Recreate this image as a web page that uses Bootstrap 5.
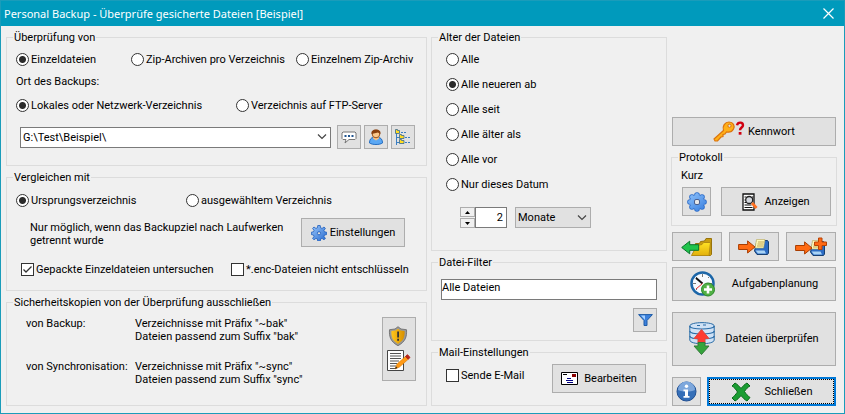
<!DOCTYPE html>
<html lang="de">
<head>
<meta charset="utf-8">
<meta name="viewport" content="width=device-width, initial-scale=1">
<title>Personal Backup</title>
<link href="https://cdn.jsdelivr.net/npm/bootstrap@5.3.0/dist/css/bootstrap.min.css" rel="stylesheet">
<style>
body{font-family:Roboto,"Noto Sans",sans-serif;font-size:11px;line-height:13px;color:#000;background:#f0f0f0}
.win{border:1px solid #1a9cba;min-height:100vh}
.titlebar{background:#009abc;color:#fff;height:25px;font-family:"Noto Sans","Open Sans",sans-serif;padding:0 10px 0 3px}
.titlebar button{border:0;background:none;padding:0;line-height:0}
.panes{display:grid;grid-template-columns:421fr 236fr 166fr;gap:4px;padding:4px 7px 7px 5px}
.pane{display:flex;flex-direction:column;gap:4px;min-width:0}
.group{border:1px solid #dcdcdc;padding:0 9px;min-width:0}
.group legend{float:none;width:auto;margin:0 0 5px -3px;padding:1px 1px 0;font-size:11px;line-height:14px;height:14px}
.line{display:grid;align-items:center;height:20px}
.l3{grid-template-columns:minmax(0,115fr) minmax(0,165fr) minmax(0,121fr)}
.l2a{grid-template-columns:minmax(0,220fr) minmax(0,181fr)}
.l2b{grid-template-columns:minmax(0,170fr) minmax(0,231fr)}
.l2c{grid-template-columns:minmax(0,210fr) minmax(0,186fr)}
.place{margin:2px 0 4px}
.opt{display:flex;align-items:center;gap:2px;white-space:nowrap}
.opt input.form-check-input{width:13px;height:13px;margin:0;border:1px solid #333;background-color:#fff;flex:none;box-shadow:none}
.opt input[type=checkbox]{border-radius:0}
.opt input[type=radio]:checked{background:radial-gradient(circle,#2b2b2b 3px,#fff 4px)}
.opt input[type=checkbox]:checked{background:#fff url("data:image/svg+xml,%3Csvg xmlns='http://www.w3.org/2000/svg' viewBox='0 0 11 11'%3E%3Cpath d='M1.500 5.500 4 8 9.500 2.500' fill='none' stroke='%23333' stroke-width='1.300'/%3E%3C/svg%3E") center/11px no-repeat}
.tool{--bs-btn-padding-x:0;--bs-btn-padding-y:0;--bs-btn-font-size:11px;--bs-btn-line-height:14px;--bs-btn-border-radius:0;--bs-btn-bg:#e1e1e1;--bs-btn-border-color:#adadad;--bs-btn-color:#000;--bs-btn-hover-bg:#e5f1fb;--bs-btn-hover-border-color:#0078d7;--bs-btn-hover-color:#000;display:flex;align-items:center;justify-content:center;white-space:nowrap}
.sq24{width:24px;height:24px}
.sq29{width:29px;height:29px}
.h29{height:29px}
.field{border:1px solid #7a7a7a;border-radius:0;height:21px;min-height:0;font-size:11px;line-height:15px;color:#000;background-color:#fff;padding:0 2px}
select.field{padding:0 20px 0 2px;background-image:url("data:image/svg+xml,%3Csvg xmlns='http://www.w3.org/2000/svg' viewBox='0 0 10 6'%3E%3Cpath d='M1 .5 5 4.500 9 .5' fill='none' stroke='%23444' stroke-width='1.200'/%3E%3C/svg%3E");background-size:10px 6px;background-position:right 3px center}
select.unit{width:76px;background-color:#e1e1e1;border-color:#adadad}
.spin{width:15px;display:flex;flex-direction:column;gap:1px}
.spin button{height:10px;border:1px solid #adadad;background:#f0f0f0;padding:0;line-height:0;display:flex;align-items:center;justify-content:center}
.num{width:32px;text-align:right;padding-right:3px}
.ages{display:grid;gap:5px;padding-left:5px}
.names{display:grid;grid-template-columns:109px 1fr;row-gap:17px;flex:1}
.pathrow{margin:10px 0 0 4px;padding-right:2px;gap:3px}
.pathrow select{margin-right:3px;flex:1 1 0}
.compare legend{margin-bottom:6px}
.hintrow{margin-top:8px;padding:0 12px 0 14px}
.hint{padding-top:3px;white-space:nowrap}
.settings{width:104px;gap:3px}
.checkrow{margin:12px 0 11px;padding-left:5px}
.excluderow{padding:3px 1px 0 10px}
.tall{width:34px;height:64px}
.period{padding:13px 0 22px 19px}
.filter{padding-bottom:8px}
.filter legend{margin-bottom:10px}
.top-text{padding:0 0 4px}
.mailrow{padding:0 11px 0 5px}
.mailrow .opt{height:20px;margin-top:1px}
.edit{width:94px;gap:6px}
.side{padding-top:87px}
.side>.tool,.trio,.closing{margin:0 1px}
.key{gap:3px}
.log{padding-bottom:9px}
.kurz{height:18px}
.logrow{gap:10px;padding-left:1px;margin-right:-4px}
.view{gap:6px}
.trio{display:grid;grid-template-columns:1fr 1fr 1fr;gap:7px;padding-top:2px}
.side .plan{height:34px;margin-top:2px;gap:16px}
.side .verify{height:54px;margin-top:7px;gap:10px}
.side .closing{margin-top:7px;gap:6px}
.default{gap:14px;border:2px solid #0078d7;position:relative}
.default::after{content:"";position:absolute;inset:0;border:1px dotted #000}
svg{flex:none;display:block}
</style>
</head>
<body>
<svg width="0" height="0" class="position-absolute" aria-hidden="true">
<defs>
<linearGradient id="blue" x1="0" y1="0" x2="1" y2="1"><stop offset="0" stop-color="#9cc8fa"/><stop offset="1" stop-color="#2468cf"/></linearGradient>
<linearGradient id="sky" gradientUnits="userSpaceOnUse" x1="3" y1="1" x2="17" y2="19"><stop offset="0" stop-color="#8cc0fa"/><stop offset="1" stop-color="#3a80e0"/></linearGradient>
<linearGradient id="gold" x1="0" y1="0" x2="1" y2="0"><stop offset="0" stop-color="#ffc51c"/><stop offset="1" stop-color="#d79000"/></linearGradient>
<linearGradient id="folder" x1="0" y1="0" x2="0" y2="1"><stop offset="0" stop-color="#ffe224"/><stop offset="1" stop-color="#e2b00c"/></linearGradient>
<symbol id="gear" viewBox="0 0 20 20"><g fill="url(#blue)" stroke="#1d5dbc" stroke-width="1"><path d="M8.500.6h3l.6 3 1.700.7L16.300 2.500l1.700 1.700-1.800 2.600.7 1.700 2.600.5v3l-2.600.5-.7 1.700 1.800 2.600-1.700 1.700-2.500-1.800-1.700.7-.6 2.900h-3l-.6-2.900-1.700-.7-2.500 1.800L2 16.800l1.800-2.600-.7-1.700-2.600-.5V9l2.600-.5.7-1.700L2 4.200l1.700-1.700 2.500 1.800 1.700-.7z"/><circle cx="10" cy="10.300" r="2" fill="#e1e1e1"/></g></symbol>
<symbol id="flower" viewBox="0 0 20 20"><g stroke="#2668c8" stroke-width="1.600" fill="#2668c8"><circle cx="10" cy="3" r="2"/><circle cx="10" cy="17" r="2"/><circle cx="3" cy="10" r="2"/><circle cx="17" cy="10" r="2"/><circle cx="5" cy="5" r="2"/><circle cx="15" cy="5" r="2"/><circle cx="5" cy="15" r="2"/><circle cx="15" cy="15" r="2"/></g><g fill="url(#sky)"><circle cx="10" cy="3" r="2"/><circle cx="10" cy="17" r="2"/><circle cx="3" cy="10" r="2"/><circle cx="17" cy="10" r="2"/><circle cx="5" cy="5" r="2"/><circle cx="15" cy="5" r="2"/><circle cx="5" cy="15" r="2"/><circle cx="15" cy="15" r="2"/><circle cx="10" cy="10" r="7"/></g><rect x="7.500" y="7.500" width="5" height="5" rx="1.500" fill="#e8e8e8" stroke="#4a5f90"/></symbol>
<symbol id="arrow" viewBox="0 0 18 14"><path d="M.6 4.500h9V.9L17 7l-7.400 6V9.500h-9z" fill="#ff6a12" stroke="#a83c00"/></symbol>
<symbol id="disk" viewBox="0 0 15 16"><path d="M3 1.500h10.500L14.500 3v11l-1 1.500H3L.5 12z" fill="#2c6cc4" stroke="#174071"/><path d="M1.500 11.500h9l1.500 3H4z" fill="#a9d3f4"/><path d="M2.500.5h8.500L9.500 9H1z" fill="#fff8b8" stroke="#b6a860" stroke-width=".6"/><path d="M4 3h6M3.500 5h6M3 7h6" stroke="#c0a552"/></symbol>
</defs>
</svg>
<main class="win">
<header class="titlebar d-flex align-items-center justify-content-between">
<span>Personal Backup - Überprüfe gesicherte Dateien [Beispiel]</span>
<button type="button" aria-label="Fenster schließen"><svg width="11" height="11"><path d="M.5.5l10 10M10.500.5l-10 10" stroke="#fff" stroke-width="1.200"/></svg></button>
</header>
<form class="panes">
<div class="pane">
<fieldset class="group pb-3">
<legend>Überprüfung von</legend>
<div class="line l3">
<label class="opt"><input class="form-check-input" type="radio" name="src" checked>Einzeldateien</label>
<label class="opt"><input class="form-check-input" type="radio" name="src">Zip-Archiven pro Verzeichnis</label>
<label class="opt"><input class="form-check-input" type="radio" name="src">Einzelnem Zip-Archiv</label>
</div>
<div class="line place" id="ort">Ort des Backups:</div>
<div class="line l2a">
<label class="opt"><input class="form-check-input" type="radio" name="loc" checked>Lokales oder Netzwerk-Verzeichnis</label>
<label class="opt"><input class="form-check-input" type="radio" name="loc">Verzeichnis auf FTP-Server</label>
</div>
<div class="d-flex align-items-center pathrow">
<select class="form-select field" aria-labelledby="ort"><option>G:\Test\Beispiel\</option></select>
<button type="button" class="btn tool sq24" aria-label="Kommentar"><svg width="16" height="13"><path d="M2 1h12l1 1v5.500l-1 1H8L4 12l1-3.500H2l-1-1V2z" fill="#fff" stroke="#777"/><path d="M3.500 4h2v2h-2zM7 4h2v2H7zM10.500 4h2v2h-2z" fill="#205590"/></svg></button>
<button type="button" class="btn tool sq24" aria-label="Benutzer"><svg width="16" height="16"><path d="M1.500 14c0-3.500 1.500-5.500 4-5.500h4.500c3 0 4.500 2 4.500 5.500-3 2-10 2-13 0z" fill="#5ba8f4" stroke="#256dc0"/><path d="M5 9.500l3 2 3-2v-2H5z" fill="#f7c283"/><circle cx="8" cy="5" r="3.800" fill="#fbc88b" stroke="#95501c"/><path d="M3.500 5C3 2 5 .5 8 .5s5 1.500 4.500 4.500L10 3.500z" fill="#89400e"/></svg></button>
<button type="button" class="btn tool sq24" aria-label="Verzeichnisbaum"><svg width="16" height="16"><path d="M1.500 4v12M2 8.500h3M2 13.500h3" stroke="#397ec2"/><path d="M6 3.500h6M10 8.500h5M10 13.500h5" stroke="#397ec2" stroke-dasharray="2 1"/><g fill="#ffdc22" stroke="#356792" stroke-width=".8"><path d="M.5.500h2v1h2v3h-4z"/><path d="M4.500 5.500h2v1h2.500v3H4.500z"/><path d="M4.500 10.500h2v1h2.500v3H4.500z"/></g></svg></button>
</div>
</fieldset>
<fieldset class="group compare">
<legend>Vergleichen mit</legend>
<div class="line l2b">
<label class="opt"><input class="form-check-input" type="radio" name="cmp" checked>Ursprungsverzeichnis</label>
<label class="opt"><input class="form-check-input" type="radio" name="cmp">ausgewähltem Verzeichnis</label>
</div>
<div class="d-flex justify-content-between hintrow">
<div class="hint">Nur möglich, wenn das Backupziel nach Laufwerken<br>getrennt wurde</div>
<button type="button" class="btn tool h29 settings"><svg width="16" height="16"><use href="#gear"/></svg>Einstellungen</button>
</div>
<div class="line l2c checkrow">
<label class="opt"><input class="form-check-input" type="checkbox" checked>Gepackte Einzeldateien untersuchen</label>
<label class="opt"><input class="form-check-input" type="checkbox">*.enc-Dateien nicht entschlüsseln</label>
</div>
</fieldset>
<fieldset class="group flex-grow-1">
<legend>Sicherheitskopien von der Überprüfung ausschließen</legend>
<div class="d-flex excluderow">
<div class="names align-content-start">
<div>von Backup:</div><div>Verzeichnisse mit Präfix "~bak"<br>Dateien passend zum Suffix "bak"</div>
<div>von Synchronisation:</div><div>Verzeichnisse mit Präfix "~sync"<br>Dateien passend zum Suffix "sync"</div>
</div>
<button type="button" class="btn tool tall" aria-label="Ausschlüsse bearbeiten"><svg width="24" height="46"><path d="M11 .7l3 2.300 5.500.7c.5 7-1 12-8.500 16C3.500 15.700 2 10.700 2.500 3.700L8 3z" fill="#999" stroke="#666" stroke-width=".8"/><path d="M11 2.700l2.600 1.800 4 .6c.3 6-1 9.700-6.600 12.800C5.400 14.800 4.100 11.100 4.400 5.100l4-.6z" fill="url(#gold)"/><path d="M10.200 5.500h1.800v6h-1.800zM10.200 12.800h1.800v2h-1.800z" fill="#333"/><path d="M.5 24.500h16v20H.5z" fill="#fff" stroke="#444"/><path d="M3 27.500h11M3 30h11M3 32.500h11M3 35h9M3 37.500h7M3 40h6M3 42.500h5" stroke="#555"/><path d="M8 43l2-5 9-8 2.500 3-9 8z" fill="#ff9a16" stroke="#d87700" stroke-width=".6"/><path d="M8 43l1-2.500 1.500 1.500z" fill="#222"/><path d="M18.500 30.500l2-1.800 2.500 2.800-2 1.700z" fill="#b72518" stroke="#b72518"/></svg></button>
</div>
</fieldset>
</div>
<div class="pane">
<fieldset class="group">
<legend>Alter der Dateien</legend>
<div class="ages">
<div class="line"><label class="opt"><input class="form-check-input" type="radio" name="age">Alle</label></div>
<div class="line"><label class="opt"><input class="form-check-input" type="radio" name="age" checked>Alle neueren ab</label></div>
<div class="line"><label class="opt"><input class="form-check-input" type="radio" name="age">Alle seit</label></div>
<div class="line"><label class="opt"><input class="form-check-input" type="radio" name="age">Alle älter als</label></div>
<div class="line"><label class="opt"><input class="form-check-input" type="radio" name="age">Alle vor</label></div>
<div class="line"><label class="opt"><input class="form-check-input" type="radio" name="age">Nur dieses Datum</label></div>
</div>
<div class="d-flex align-items-center period">
<div class="spin"><button type="button" aria-label="Mehr"><svg width="5" height="3"><path d="M0 3h5L2.500 0z"/></svg></button><button type="button" aria-label="Weniger"><svg width="5" height="3"><path d="M0 0h5L2.500 3z"/></svg></button></div>
<input class="field num" type="text" value="2" aria-label="Anzahl">
<select class="form-select field unit ms-2" aria-label="Einheit"><option>Monate</option></select>
</div>
</fieldset>
<fieldset class="group filter">
<legend id="flt">Datei-Filter</legend>
<input class="field top-text w-100" type="text" value="Alle Dateien" aria-labelledby="flt">
<button type="button" class="btn tool sq24 ms-auto mt-2" aria-label="Filter"><svg width="15" height="12"><path d="M.6.6h13.800L9 6.500v5H6v-5z" fill="#3b80dc" stroke="#1e5ba6"/><path d="M3 1.500h4L7 6z" fill="#a6d1ff"/></svg></button>
</fieldset>
<fieldset class="group flex-grow-1">
<legend>Mail-Einstellungen</legend>
<div class="d-flex justify-content-between mailrow">
<label class="opt"><input class="form-check-input" type="checkbox">Sende E-Mail</label>
<button type="button" class="btn tool h29 edit"><svg width="17" height="13"><path d="M.5.5h16v12H.5z" fill="#fff" stroke="#000"/><path d="M11 2h4v3h-4z" fill="#8a0000"/><path d="M2 2.500h4" stroke="#000"/><path d="M6 6.500h4M5 8.500h7M6 10.500h6" stroke="#000080"/></svg>Bearbeiten</button>
</div>
</fieldset>
</div>
<div class="pane side">
<button type="button" class="btn tool h29 key"><svg width="32" height="22"><path d="M1 18l9.500-8.500C9 5 12 1 16 1c4.500 0 6 4 4.500 7-1.500 3-4.500 3.500-7 3l-1.500 2-2 .5v2L8 16l-3.500 4H2z" fill="#ffb018" stroke="#db740e" stroke-width="1.200"/><circle cx="16.500" cy="4.800" r="1.600" fill="#e1e1e1" stroke="#db740e"/><path d="M24 4.200c1-3.700 6-3.200 6 0 0 2.300-3 2.300-3 5" fill="none" stroke="#d00010" stroke-width="2.400"/><path d="M25.700 11h2.800v2.700h-2.800z" fill="#d00010"/></svg>Kennwort</button>
<fieldset class="group log">
<legend>Protokoll</legend>
<div class="kurz">Kurz</div>
<div class="d-flex logrow">
<button type="button" class="btn tool sq29" aria-label="Protokolleinstellungen"><svg width="20" height="20"><use href="#flower"/></svg></button>
<button type="button" class="btn tool h29 flex-grow-1 view"><svg width="16" height="18"><path d="M1 1h11v16H1z" fill="#fff" stroke="#111" stroke-width="1.300"/><path d="M2.500 4h2M10 4h1.500M2.500 7h1M2.500 9.500h2M2.500 12h7M2.500 14.500h8" stroke="#111" stroke-width="1.200"/><circle cx="7.200" cy="7" r="3.500" fill="#d4d8df" stroke="#222" stroke-width="1.300"/><path d="M10 10l4.500 5" stroke="#ff7020" stroke-width="2.800"/></svg>Anzeigen</button>
</div>
</fieldset>
<div class="trio">
<button type="button" class="btn tool h29" aria-label="Öffnen"><svg width="32" height="20"><path d="M14.500 18.500v-12h4l1-2 4-.5 1.500-2.500h5.500v16l-1 1z" fill="#c89c10" stroke="#98730b"/><path d="M10.500 18.500l5.500-10 5-1 1.500-2h7l-1.500 13z" fill="url(#folder)" stroke="#b48c12"/><path d="M.7 10.500l8-6.300v3.500h9v5.600h-9v3.500z" fill="#20c44c" stroke="#08722a"/></svg></button>
<button type="button" class="btn tool h29" aria-label="Speichern"><svg width="32" height="18"><use href="#disk" x="16" y="1" width="15" height="16"/><use href="#arrow" x="0" y="2" width="18" height="14"/></svg></button>
<button type="button" class="btn tool h29" aria-label="Speichern unter"><svg width="32" height="20"><use href="#disk" x="15" y="3" width="15" height="16"/><use href="#arrow" x="0" y="4" width="18" height="14"/><path d="M23.500 1h3.500v4h4.500v3.500H27v4h-3.500v-4h-4V5h4z" fill="#ff6914" stroke="#b94304"/></svg></button>
</div>
<button type="button" class="btn tool plan"><svg width="26" height="26"><circle cx="12.500" cy="12.500" r="11" fill="#f6faff" stroke="#1c66a8" stroke-width="2.500"/><path d="M12.500 3v3M12.500 19v3M3 12.500h3M19 12.500h3M6 6l1 1M19 6l-1 1M6 19l1-1" stroke="#777"/><path d="M12.500 12.500L6 7" stroke="#111" stroke-width="2"/><path d="M12.500 12.500L6 18" stroke="#e02525"/><circle cx="18" cy="18.500" r="6.500" fill="#51b044" stroke="#278727"/><path d="M18 14.500v8M14 18.500h8" stroke="#fff" stroke-width="2.600"/></svg>Aufgabenplanung</button>
<button type="button" class="btn tool verify"><svg width="26" height="34"><path d="M.8 4v14c0 5 24.400 5 24.400 0V4c0-4.500-24.400-4.500-24.400 0z" fill="#cfe1f5" stroke="#286ba6"/><path d="M.8 4c0 4 24.400 4 24.400 0M.8 9c0 4 24.400 4 24.400 0M.8 14c0 4 24.400 4 24.400 0" fill="none" stroke="#286ba6" stroke-width="1.200"/><path d="M8 3.500h3M14 3h3" stroke="#286ba6"/><path d="M12.500 7.500l7.500 9h-4V21H9v-4.500H5z" fill="#ff3a31" stroke="#d94840"/><path d="M9 20.500h7V24h4l-7.500 8.500L5 24h4z" fill="#34a43b" stroke="#34783a"/></svg>Dateien überprüfen</button>
<div class="d-flex closing">
<button type="button" class="btn tool sq29" aria-label="Info"><svg width="21" height="21"><circle cx="10.500" cy="10.500" r="9.500" fill="#356fb8" stroke="#1d4d91"/><path d="M2 9a8.500 8.500 0 0 1 17 0c-5 2-12 2-17 0z" fill="#7da7dc"/><circle cx="10.500" cy="5.300" r="1.700" fill="#fff"/><path d="M7.500 8.500H12V15h1.500v1.700h-6V15H9v-4.800H7.500z" fill="#fff"/></svg></button>
<button type="button" class="btn tool h29 flex-grow-1 default"><svg width="20" height="20"><path d="M1 4l3-3c2 1 4 3 6 5.500C12 4 14 2 16 1l3 3c-2 1-4 3-5.500 5.500C15 12 17 14 19 15.500l-3 3.500c-2-1-4-3-6-5.500-2 2.500-4 4.500-6 5.500l-3-3c2-1.500 4-4 5.500-6C5 7.500 3 5 1 4z" fill="#1a9c32" stroke="#0a6a1b"/></svg>Schließen</button>
</div>
</div>
</form>
</main>
<script src="https://cdn.jsdelivr.net/npm/bootstrap@5.3.0/dist/js/bootstrap.bundle.min.js"></script>
</body>
</html>
